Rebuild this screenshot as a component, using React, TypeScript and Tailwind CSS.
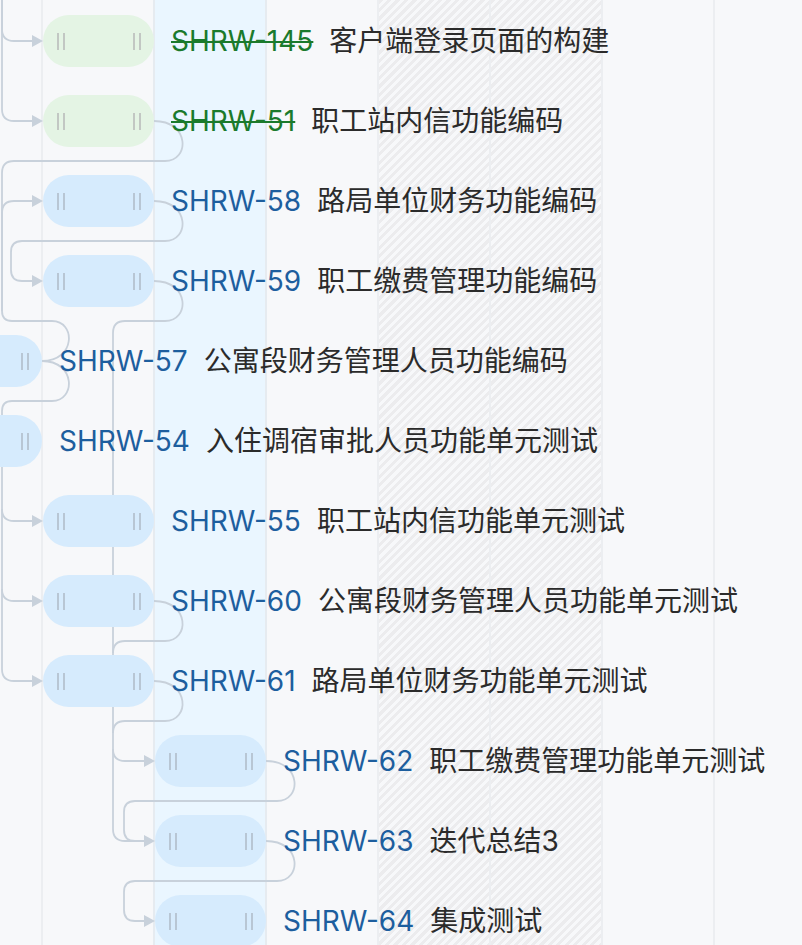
import React from 'react'

type Row = { id: string; title: string; indent: 0 | 1 | 2; done?: boolean }

const ROWS: Row[] = [
  { id: 'SHRW-145', title: '客户端登录页面的构建', indent: 1, done: true },
  { id: 'SHRW-51', title: '职工站内信功能编码', indent: 1, done: true },
  { id: 'SHRW-58', title: '路局单位财务功能编码', indent: 1 },
  { id: 'SHRW-59', title: '职工缴费管理功能编码', indent: 1 },
  { id: 'SHRW-57', title: '公寓段财务管理人员功能编码', indent: 0 },
  { id: 'SHRW-54', title: '入住调宿审批人员功能单元测试', indent: 0 },
  { id: 'SHRW-55', title: '职工站内信功能单元测试', indent: 1 },
  { id: 'SHRW-60', title: '公寓段财务管理人员功能单元测试', indent: 1 },
  { id: 'SHRW-61', title: '路局单位财务功能单元测试', indent: 1 },
  { id: 'SHRW-62', title: '职工缴费管理功能单元测试', indent: 2 },
  { id: 'SHRW-63', title: '迭代总结3', indent: 2 },
  { id: 'SHRW-64', title: '集成测试', indent: 2 },
]

const BAR_OFFSET = {
  0: '-ml-[69px]',
  1: 'ml-[43px]',
  2: 'ml-[155px]',
}

const HATCH = 'bg-[repeating-linear-gradient(135deg,#ececee_0_3px,#f7f8fa_3px_6px)]'

// dependency connectors, drawn under the bars
const LINKS = [
  'M2,-10 V29 Q2,41 14,41 H33',
  'M2,-10 V109 Q2,121 14,121 H33',
  'M154,121 C190,121 190,161 165,161 H14 Q2,161 2,173 V311',
  'M154,201 C190,201 190,241 165,241 H22 Q11,241 11,252 V270 Q11,281 22,281 H33',
  'M42,361 C76,361 76,321 52,321 H12 Q2,321 2,311 V213 Q2,201 14,201 H33',
  'M42,361 C76,361 76,401 52,401 H12 Q2,401 2,411 V669 Q2,681 14,681 H33',
  'M2,509 Q2,521 14,521 H33',
  'M2,589 Q2,601 14,601 H33',
  'M154,281 C190,281 190,321 165,321 H125 Q113,321 113,333 V829 Q113,841 125,841 H145',
  'M113,749 Q113,761 125,761 H145',
  'M154,601 C190,601 190,641 165,641 H125 Q113,641 113,653',
  'M154,681 C190,681 190,721 165,721 H125 Q113,721 113,733',
  'M266,761 C302,761 302,801 277,801 H135 Q124,801 124,812 V830 Q124,841 135,841 H145',
  'M266,841 C302,841 302,881 277,881 H135 Q124,881 124,892 V910 Q124,921 135,921 H145',
]

const ARROWS: [number, number][] = [
  [43, 41], [43, 121], [43, 201], [43, 281], [43, 521], [43, 601], [43, 681],
  [155, 761], [155, 841], [155, 921],
]

function Handle({ done }: { done?: boolean }) {
  const c = done ? 'bg-[#c2c7c3]' : 'bg-[#b8c6d4]'
  return (
    <div className="flex gap-[4px]">
      <span className={`w-[2px] h-[17px] ${c}`} />
      <span className={`w-[2px] h-[17px] ${c}`} />
    </div>
  )
}

export default function App() {
  return (
    <div
      className="relative w-full h-[945px] overflow-hidden bg-[#f7f8fa]"
      style={{ fontFamily: 'Inter, "Noto Sans CJK SC", sans-serif' }}
    >
      {/* day columns */}
      <div className="absolute inset-0 flex" aria-hidden>
        <div className="w-[41px] shrink-0" />
        <div className="w-[112px] shrink-0 border-l-2 border-[#eceef1]" />
        <div className="w-[112px] shrink-0 border-l-2 border-[#e6ebf0] bg-[#eaf6ff]" />
        <div className="w-[112px] shrink-0 border-l-2 border-[#e6ebf0]" />
        <div className={`w-[112px] shrink-0 border-l-2 border-[#eceef1] ${HATCH}`} />
        <div className={`w-[112px] shrink-0 border-l-2 border-[#eceef1] ${HATCH}`} />
        <div className="w-[112px] shrink-0 border-l-2 border-[#eceef1]" />
        <div className="w-[112px] shrink-0 border-l-2 border-[#eceef1]" />
      </div>

      {/* links */}
      <svg className="absolute inset-0" width="802" height="945" aria-hidden>
        {LINKS.map((d, i) => (
          <path key={i} d={d} fill="none" stroke="#c8d1db" strokeWidth={1.8} />
        ))}
        {ARROWS.map(([x, y], i) => (
          <polygon key={i} points={`${x},${y} ${x - 11},${y - 6} ${x - 11},${y + 6}`} fill="#c8d1db" />
        ))}
      </svg>

      {/* task rows */}
      <div className="relative pt-px">
        {ROWS.map((r) => (
          <div key={r.id} className="h-[80px] flex items-center whitespace-nowrap">
            <div
              className={`${BAR_OFFSET[r.indent]} w-[111px] h-[52px] shrink-0 rounded-full flex items-center justify-between pl-[14px] pr-[13px] ${
                r.done ? 'bg-[#e4f4e4]' : 'bg-[#d6ebfd]'
              }`}
            >
              <Handle done={r.done} />
              <Handle done={r.done} />
            </div>
            <span
              className={`ml-[17px] text-[28px] leading-none ${
                r.done ? 'text-[#1b7a2c] line-through decoration-2' : 'text-[#1d5e9e]'
              }`}
            >
              {r.id}
            </span>
            <span className="ml-[16px] text-[28px] leading-none text-[#2b2b2b]">{r.title}</span>
          </div>
        ))}
      </div>
    </div>
  )
}
